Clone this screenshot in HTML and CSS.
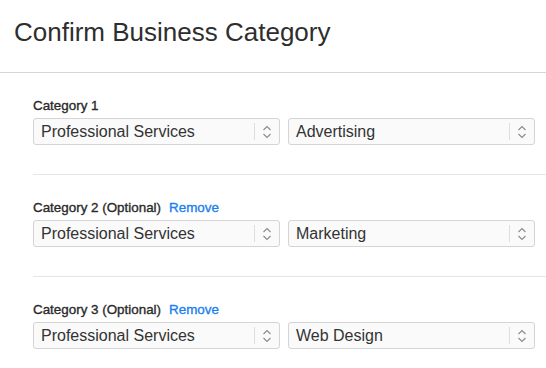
FILE: index.html
```html
<!DOCTYPE html>
<html>
<head>
<meta charset="utf-8">
<link rel="stylesheet" href="styles.css">
</head>
<body>
<header class="header">
  <h1 class="title">Confirm Business Category</h1>
</header>
<main class="content">
  <section class="category">
    <div class="label-row"><span class="label">Category 1</span></div>
    <div class="fields">
      <div class="select"><span class="value">Professional Services</span><span class="arrows"><svg width="10" height="14" viewBox="0 0 10 14"><path d="M1.5 5 L5 1.5 L8.5 5 M1.5 9 L5 12.5 L8.5 9" fill="none" stroke="#8a8a8a" stroke-width="1.1"/></svg></span></div>
      <div class="select"><span class="value">Advertising</span><span class="arrows"><svg width="10" height="14" viewBox="0 0 10 14"><path d="M1.5 5 L5 1.5 L8.5 5 M1.5 9 L5 12.5 L8.5 9" fill="none" stroke="#8a8a8a" stroke-width="1.1"/></svg></span></div>
    </div>
  </section>
  <section class="category">
    <div class="label-row"><span class="label">Category 2 (Optional)</span><a class="remove">Remove</a></div>
    <div class="fields">
      <div class="select"><span class="value">Professional Services</span><span class="arrows"><svg width="10" height="14" viewBox="0 0 10 14"><path d="M1.5 5 L5 1.5 L8.5 5 M1.5 9 L5 12.5 L8.5 9" fill="none" stroke="#8a8a8a" stroke-width="1.1"/></svg></span></div>
      <div class="select"><span class="value">Marketing</span><span class="arrows"><svg width="10" height="14" viewBox="0 0 10 14"><path d="M1.5 5 L5 1.5 L8.5 5 M1.5 9 L5 12.5 L8.5 9" fill="none" stroke="#8a8a8a" stroke-width="1.1"/></svg></span></div>
    </div>
  </section>
  <section class="category">
    <div class="label-row"><span class="label">Category 3 (Optional)</span><a class="remove">Remove</a></div>
    <div class="fields">
      <div class="select"><span class="value">Professional Services</span><span class="arrows"><svg width="10" height="14" viewBox="0 0 10 14"><path d="M1.5 5 L5 1.5 L8.5 5 M1.5 9 L5 12.5 L8.5 9" fill="none" stroke="#8a8a8a" stroke-width="1.1"/></svg></span></div>
      <div class="select"><span class="value">Web Design</span><span class="arrows"><svg width="10" height="14" viewBox="0 0 10 14"><path d="M1.5 5 L5 1.5 L8.5 5 M1.5 9 L5 12.5 L8.5 9" fill="none" stroke="#8a8a8a" stroke-width="1.1"/></svg></span></div>
    </div>
  </section>
</main>
</body>
</html>
```

FILE: styles.css
```css
html, body {
  margin: 0;
  padding: 0;
  background: #ffffff;
  font-family: "Liberation Sans", Arial, sans-serif;
  color: #333333;
}

.header {
  height: 72px;
  border-bottom: 1px solid #d6d6d6;
  display: flex;
  align-items: flex-start;
}

.title {
  margin: 0;
  padding: 16px 0 0 14px;
  font-size: 26px;
  font-weight: normal;
  line-height: 32px;
  color: #2e2e2e;
}

.content {
  padding-left: 33px;
}

.category {
  padding: 25px 11px 29px 0;
  border-bottom: 1px solid #e6e6e6;
}

.label-row {
  display: flex;
  align-items: center;
  gap: 8px;
  height: 15px;
  margin-bottom: 5px;
}

.label {
  font-size: 13.4px;
  color: #2a2a2a;
  -webkit-text-stroke: 0.35px #2a2a2a;
}

.remove {
  font-size: 13.4px;
  color: #1a7ff0;
  -webkit-text-stroke: 0.35px #1a7ff0;
}

.fields {
  display: grid;
  grid-template-columns: 1fr 1fr;
  gap: 8px;
}

.select {
  height: 25px;
  border: 1px solid #d4d4d4;
  border-radius: 3px;
  background: #fafafa;
  display: flex;
  align-items: center;
}

.value {
  flex: 1;
  padding-left: 7px;
  font-size: 16px;
  color: #333333;
}

.arrows {
  width: 24px;
  height: 17px;
  border-left: 1px solid #dedede;
  display: flex;
  align-items: center;
  justify-content: center;
}

.arrows svg {
  display: block;
}
```
